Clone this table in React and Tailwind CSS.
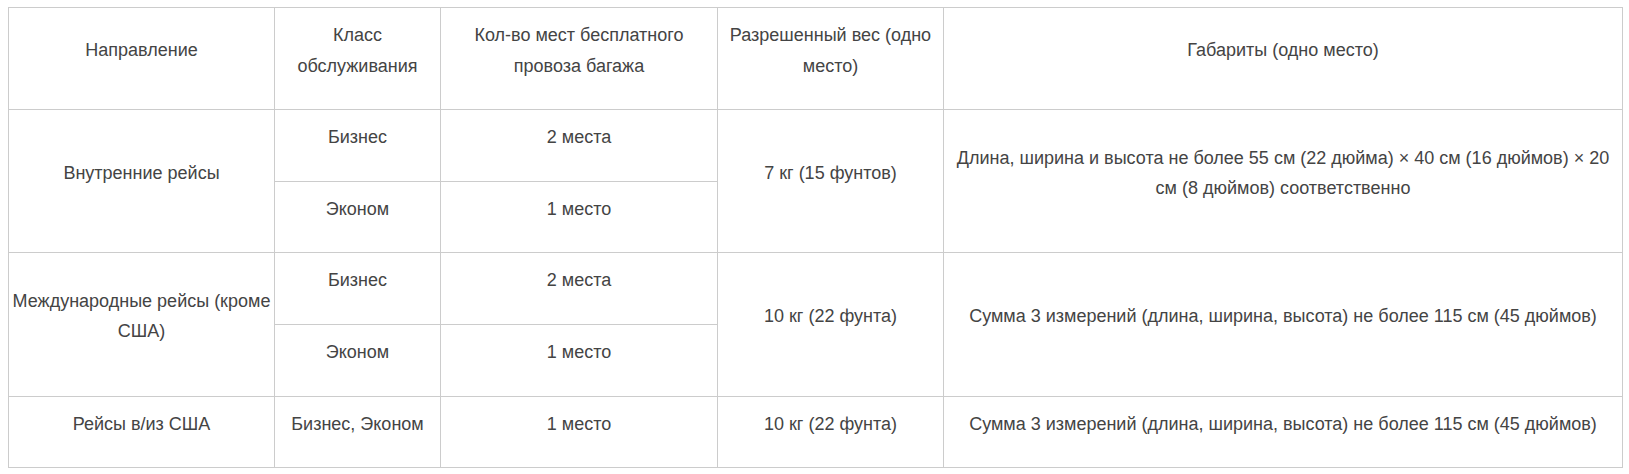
import React from 'react';

const cell = "border border-[#cccccc] px-0.5 pt-3 pb-3 text-center align-middle";

const Cell = ({ children, rowSpan }) => (
    <td rowSpan={rowSpan} className={cell}>
        <p className="mb-4">{children}</p>
    </td>
);

export default function App() {
    return (
        <div className="bg-white pt-[7px] pl-2 min-h-screen font-['Liberation_Sans',Arial,sans-serif] text-[18px] leading-[1.7] text-[#444444]">
            <table className="w-[1615px] table-fixed border-collapse border border-[#cccccc]">
                <colgroup>
                    <col className="w-[266px]" />
                    <col className="w-[166px]" />
                    <col className="w-[277px]" />
                    <col className="w-[226px]" />
                    <col />
                </colgroup>
                <tbody>
                    <tr>
                        <Cell>Направление</Cell>
                        <Cell>Класс обслуживания</Cell>
                        <Cell>Кол-во мест бесплатного провоза багажа</Cell>
                        <Cell>Разрешенный вес (одно место)</Cell>
                        <Cell>Габариты (одно место)</Cell>
                    </tr>
                    <tr>
                        <Cell rowSpan={2}>Внутренние рейсы</Cell>
                        <Cell>Бизнес</Cell>
                        <Cell>2 места</Cell>
                        <Cell rowSpan={2}>7 кг (15 фунтов)</Cell>
                        <Cell rowSpan={2}>Длина, ширина и высота не более 55 см (22 дюйма) × 40 см (16 дюймов) × 20 см (8 дюймов) соответственно</Cell>
                    </tr>
                    <tr>
                        <Cell>Эконом</Cell>
                        <Cell>1 место</Cell>
                    </tr>
                    <tr>
                        <Cell rowSpan={2}>Международные рейсы (кроме США)</Cell>
                        <Cell>Бизнес</Cell>
                        <Cell>2 места</Cell>
                        <Cell rowSpan={2}>10 кг (22 фунта)</Cell>
                        <Cell rowSpan={2}>Сумма 3 измерений (длина, ширина, высота) не более 115 см (45 дюймов)</Cell>
                    </tr>
                    <tr>
                        <Cell>Эконом</Cell>
                        <Cell>1 место</Cell>
                    </tr>
                    <tr>
                        <Cell>Рейсы в/из США</Cell>
                        <Cell>Бизнес, Эконом</Cell>
                        <Cell>1 место</Cell>
                        <Cell>10 кг (22 фунта)</Cell>
                        <Cell>Сумма 3 измерений (длина, ширина, высота) не более 115 см (45 дюймов)</Cell>
                    </tr>
                </tbody>
            </table>
        </div>
    );
}
